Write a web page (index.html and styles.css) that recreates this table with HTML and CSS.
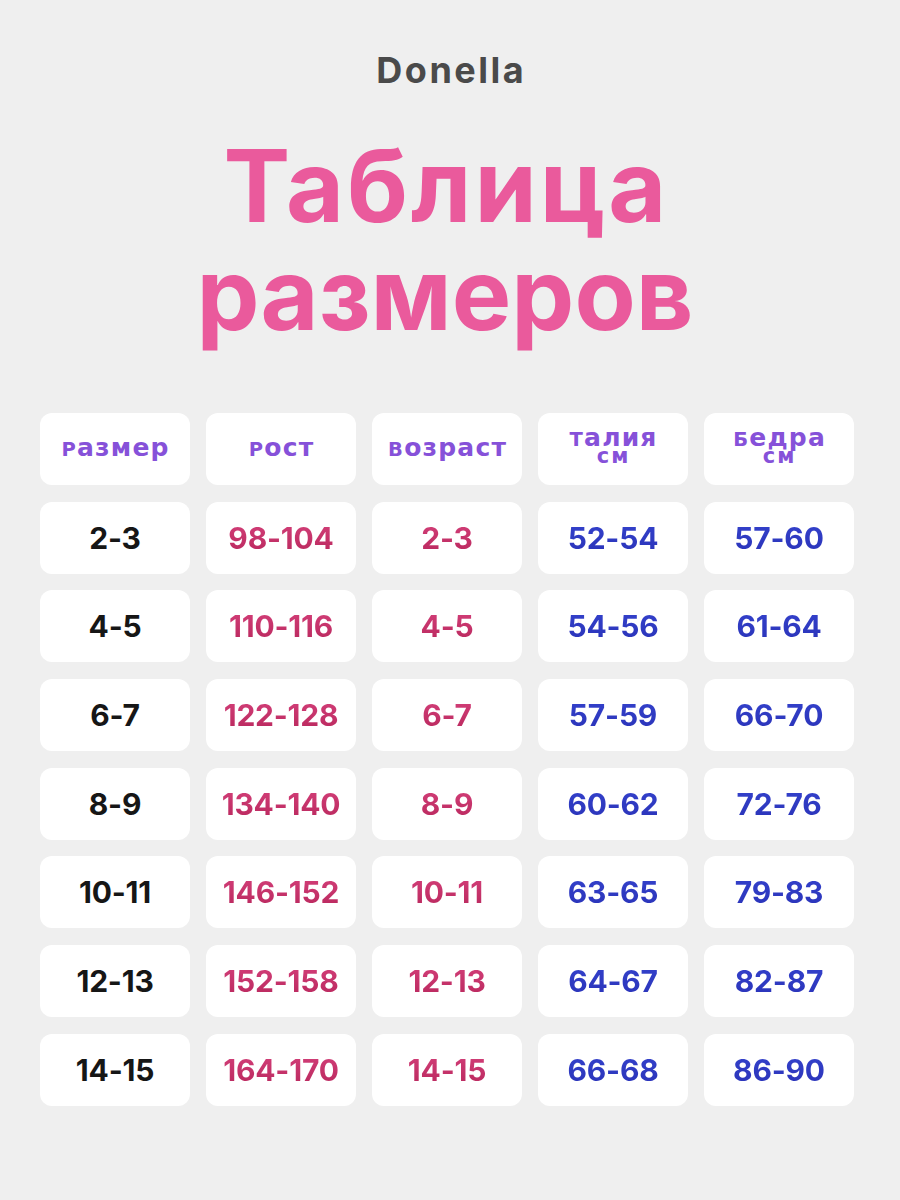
FILE: index.html
```html
<!DOCTYPE html>
<html lang="ru">
<head>
<meta charset="utf-8">
<title>Donella — Таблица размеров</title>
<link rel="stylesheet" href="styles.css">
</head>
<body>
<main class="page">
  <header class="head">
    <div class="brand">Donella</div>
    <h1 class="title"><span class="l1">Таблица</span><span class="l2">размеров</span></h1>
  </header>
  <section class="table">
    <div class="cell hd"><span><span class="cap">Р</span>азмер</span></div>
    <div class="cell hd"><span><span class="cap">Р</span>ост</span></div>
    <div class="cell hd"><span><span class="cap">В</span>озраст</span></div>
    <div class="cell hd two"><span><span class="cap">Т</span>алия</span><span class="unit">см</span></div>
    <div class="cell hd two"><span><span class="cap">Б</span>едра</span><span class="unit">см</span></div>

    <div class="cell"><span class="v dark">2-3</span></div>
    <div class="cell"><span class="v pink">98-104</span></div>
    <div class="cell"><span class="v pink">2-3</span></div>
    <div class="cell"><span class="v blue">52-54</span></div>
    <div class="cell"><span class="v blue">57-60</span></div>

    <div class="cell"><span class="v dark">4-5</span></div>
    <div class="cell"><span class="v pink">110-116</span></div>
    <div class="cell"><span class="v pink">4-5</span></div>
    <div class="cell"><span class="v blue">54-56</span></div>
    <div class="cell"><span class="v blue">61-64</span></div>

    <div class="cell"><span class="v dark">6-7</span></div>
    <div class="cell"><span class="v pink">122-128</span></div>
    <div class="cell"><span class="v pink">6-7</span></div>
    <div class="cell"><span class="v blue">57-59</span></div>
    <div class="cell"><span class="v blue">66-70</span></div>

    <div class="cell"><span class="v dark">8-9</span></div>
    <div class="cell"><span class="v pink">134-140</span></div>
    <div class="cell"><span class="v pink">8-9</span></div>
    <div class="cell"><span class="v blue">60-62</span></div>
    <div class="cell"><span class="v blue">72-76</span></div>

    <div class="cell"><span class="v dark">10-11</span></div>
    <div class="cell"><span class="v pink">146-152</span></div>
    <div class="cell"><span class="v pink">10-11</span></div>
    <div class="cell"><span class="v blue">63-65</span></div>
    <div class="cell"><span class="v blue">79-83</span></div>

    <div class="cell"><span class="v dark">12-13</span></div>
    <div class="cell"><span class="v pink">152-158</span></div>
    <div class="cell"><span class="v pink">12-13</span></div>
    <div class="cell"><span class="v blue">64-67</span></div>
    <div class="cell"><span class="v blue">82-87</span></div>

    <div class="cell"><span class="v dark">14-15</span></div>
    <div class="cell"><span class="v pink">164-170</span></div>
    <div class="cell"><span class="v pink">14-15</span></div>
    <div class="cell"><span class="v blue">66-68</span></div>
    <div class="cell"><span class="v blue">86-90</span></div>
  </section>
</main>
</body>
</html>
```
FILE: styles.css
```css
html, body {
  margin: 0;
  padding: 0;
}
body {
  background: #efefef;
  font-family: Inter, "Noto Sans", "Liberation Sans", sans-serif;
  width: 900px;
  height: 1200px;
  overflow: hidden;
}
.page {
  display: flex;
  flex-direction: column;
  align-items: center;
}
.head {
  display: flex;
  flex-direction: column;
  align-items: center;
  padding-top: 46px;
}
.brand {
  font-size: 36px;
  font-weight: 700;
  color: #4a4a4a;
  line-height: 48px;
  letter-spacing: 2.5px;
  padding-left: 2.5px;
}
.title {
  margin: 38px 10px 0 0;
  font-size: 100px;
  font-weight: 700;
  line-height: 108px;
  text-align: center;
  color: #ea5a9c;
  display: flex;
  flex-direction: column;
  align-items: center;
}
.title .l1 {
  letter-spacing: 3px;
  padding-left: 3px;
}
.table {
  margin: 65px 6px 0 0;
  display: grid;
  grid-template-columns: repeat(5, 150.5px);
  grid-auto-rows: 72px;
  column-gap: 15.5px;
  row-gap: 16.7px;
}
.cell {
  background: #ffffff;
  border-radius: 12px;
  display: flex;
  align-items: center;
  justify-content: center;
  text-align: center;
}
.hd {
  font-family: "DejaVu Sans", Inter, sans-serif;
  font-size: 25px;
  font-weight: 700;
  color: #8651d9;
  letter-spacing: 1.2px;
  padding-left: 1.2px;
  line-height: 26px;
}
.hd .cap {
  font-size: 0.78em;
}
.hd.two {
  flex-direction: column;
  line-height: 17px;
  padding-bottom: 4px;
}
.hd .unit {
  font-size: 21px;
  letter-spacing: 2px;
}
.v {
  font-size: 30px;
  font-weight: 700;
  line-height: 36px;
  letter-spacing: -0.2px;
}
.dark { color: #161616; }
.pink {
  color: #c6326b;
  background: linear-gradient(180deg, #d4407a 0%, #b8275c 100%);
  -webkit-background-clip: text;
  background-clip: text;
  -webkit-text-fill-color: transparent;
}
.blue {
  color: #2e39c3;
  background: linear-gradient(180deg, #3442cc 0%, #2a33b8 100%);
  -webkit-background-clip: text;
  background-clip: text;
  -webkit-text-fill-color: transparent;
}
```
